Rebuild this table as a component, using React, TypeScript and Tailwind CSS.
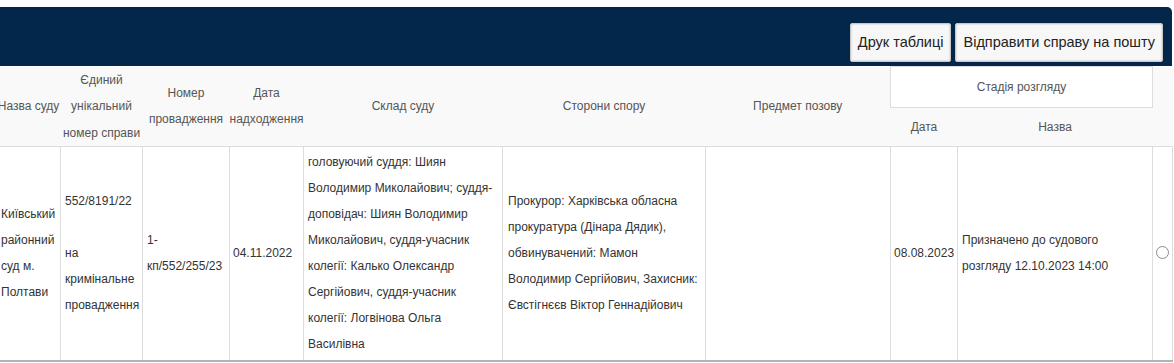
import React from 'react';

const colWidths = [64, 82, 87, 74, 199, 203, 185, 67, 195, 20];

const composition =
  'головуючий суддя: Шиян Володимир Миколайович; суддя-доповідач: Шиян Володимир Миколайович, суддя-учасник колегії: Калько Олександр Сергійович, суддя-учасник колегії: Логвінова Ольга Василівна';

const parties =
  'Прокурор: Харківська обласна прокуратура (Дінара Дядик), обвинувачений: Мамон Володимир Сергійович, Захисник: Євстігнєєв Віктор Геннадійович';

export default function App() {
  const th = 'font-normal text-[12px] leading-[26.5px] text-[#555] text-center align-middle whitespace-nowrap px-0';
  const td = 'border-x border-[#ddd] align-middle py-[2px] text-[12px] leading-[26px] text-[#333]';
  const btn =
    'h-[39px] px-[7px] bg-[#f7f7f7] border border-[#c8c8c8] rounded-[2px] shadow-[inset_0_0_2px_rgba(0,0,0,0.25)] text-[14.5px] text-[#222]';

  return (
    <div className="bg-white min-h-screen pt-[7px] overflow-hidden" style={{ fontFamily: '"Liberation Sans", Arial, sans-serif' }}>
      <div className="h-[59px] mr-[2px] bg-[#03264b] rounded-tr-[5px] flex justify-end items-end gap-[4px] pr-[9px] pb-[4px]">
        <button className={btn}>Друк таблиці</button>
        <button className={btn}>Відправити справу на пошту</button>
      </div>

      <div className="overflow-hidden">
        <table className="table-fixed border-collapse -ml-[4px] w-[1176px]">
          <colgroup>
            {colWidths.map((w, i) => (
              <col key={i} style={{ width: w }} />
            ))}
          </colgroup>
          <thead className="bg-[#f9f9f9]">
            <tr className="h-[41px]">
              <th rowSpan={2} className={th}>Назва суду</th>
              <th rowSpan={2} className={th}>Єдиний<br />унікальний<br />номер справи</th>
              <th rowSpan={2} className={th}>Номер<br />провадження</th>
              <th rowSpan={2} className={th}>Дата<br />надходження</th>
              <th rowSpan={2} className={th}>Склад суду</th>
              <th rowSpan={2} className={th}>Сторони спору</th>
              <th rowSpan={2} className={th}>Предмет позову</th>
              <th colSpan={2} className={`${th} bg-white border border-[#ddd]`}>Стадія розгляду</th>
              <th rowSpan={2} className={th}></th>
            </tr>
            <tr className="h-[39px] border-b border-[#ddd]">
              <th className={th}>Дата</th>
              <th className={th}>Назва</th>
            </tr>
          </thead>
          <tbody>
            <tr className="h-[214px] border-b-2 border-[#b4b4b4]">
              <td className={`${td} pl-[4px] pr-[3px]`}>Київський районний суд м. Полтави</td>
              <td className={`${td} pl-[4px] pr-[3px]`}>
                552/8191/22
                <br />
                <br />
                на кримінальне провадження
              </td>
              <td className={`${td} pl-[4px] pr-[3px]`}>1-кп/552/255/23</td>
              <td className={`${td} pl-[3px] pr-[3px]`}>04.11.2022</td>
              <td className={`${td} pl-[4px] pr-[7px]`}>{composition}</td>
              <td className={`${td} pl-[5px] pr-[4px]`}>{parties}</td>
              <td className={td}></td>
              <td className={`${td} pl-[3px] pr-[2px]`}>08.08.2023</td>
              <td className={`${td} pl-[4px] pr-[4px]`}>Призначено до судового розгляду 12.10.2023 14:00</td>
              <td className={td}>
                <span className="block w-[13px] h-[13px] ml-[3px] -mt-[2px] rounded-full border border-[#8a8a8a] bg-white" />
              </td>
            </tr>
          </tbody>
        </table>
      </div>
    </div>
  );
}
